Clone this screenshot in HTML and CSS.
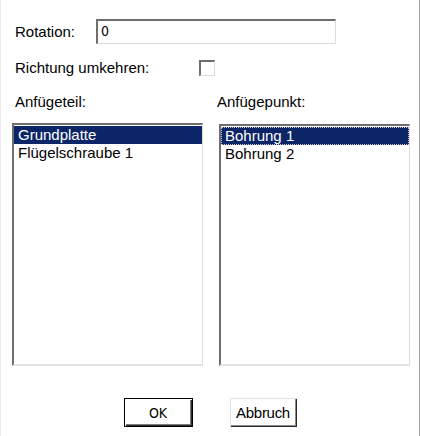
FILE: index.html
```html
<!DOCTYPE html>
<html lang="de">
<head>
<meta charset="utf-8">
<title>Anfügen</title>
<link rel="stylesheet" href="styles.css">
</head>
<body>
<div class="dialog">
  <div class="field-row rotation-row">
    <label class="field-label rotation-label" for="rotation">Rotation:</label>
    <div class="text-input" id="rotation">0</div>
  </div>
  <div class="field-row reverse-row">
    <span class="field-label reverse-label">Richtung umkehren:</span>
    <span class="checkbox"></span>
  </div>
  <div class="lists">
    <div class="list-col">
      <div class="list-label left-label">Anfügeteil:</div>
      <ul class="listbox">
        <li class="list-item selected">Grundplatte</li>
        <li class="list-item">Flügelschraube 1</li>
      </ul>
    </div>
    <div class="list-col right-col">
      <div class="list-label right-label">Anfügepunkt:</div>
      <ul class="listbox">
        <li class="list-item selected focused">Bohrung 1</li>
        <li class="list-item">Bohrung 2</li>
      </ul>
    </div>
  </div>
  <div class="buttons">
    <button class="btn btn-default">OK</button>
    <button class="btn btn-cancel">Abbruch</button>
  </div>
</div>
</body>
</html>
```
FILE: styles.css
```css
html, body {
  margin: 0;
  padding: 0;
  background: #fff;
}

body {
  font-family: "Liberation Sans", Arial, sans-serif;
  font-size: 15px;
  color: #000;
}

.dialog {
  width: 420px;
  height: 436px;
  box-sizing: border-box;
  border-right: 1px solid #a4a4a4;
  border-left: 1px solid #ececec;
  background: #fff;
  display: flex;
  flex-direction: column;
}

.field-row {
  display: flex;
  align-items: center;
  padding-left: 14px;
}

.rotation-row {
  padding-top: 19px;
}

.rotation-label {
  width: 81px;
}

.text-input {
  width: 240px;
  height: 25px;
  box-sizing: border-box;
  border-top: 2px solid #6e6e6e;
  border-left: 2px solid #6e6e6e;
  border-right: 1px solid #dcdcdc;
  border-bottom: 1px solid #dcdcdc;
  padding-left: 3px;
  line-height: 21px;
  font-family: "DejaVu Sans Condensed", "Liberation Sans", sans-serif;
  font-size: 14px;
}

.reverse-row {
  margin-top: 15px;
}

.reverse-label {
  width: 184px;
}

.checkbox {
  width: 16px;
  height: 16px;
  box-sizing: border-box;
  border-top: 2px solid #6e6e6e;
  border-left: 2px solid #6e6e6e;
  border-right: 1px solid #dcdcdc;
  border-bottom: 1px solid #dcdcdc;
  background: #fff;
}

.lists {
  display: flex;
  margin-top: 17px;
  padding-left: 11px;
}

.list-col {
  display: flex;
  flex-direction: column;
  width: 191px;
}

.right-col {
  margin-left: 16px;
}

.list-label {
  line-height: 17px;
  height: 17px;
  margin-bottom: 13px;
}

.left-label {
  padding-left: 3px;
}

.right-label {
  margin-left: -2px;
}

.listbox {
  list-style: none;
  margin: 0;
  padding: 1px 0 0 0;
  height: 243px;
  box-sizing: border-box;
  border-top: 2px solid #6e6e6e;
  border-left: 2px solid #6e6e6e;
  border-right: 1px solid #dcdcdc;
  border-bottom: 2px solid #e4e4e4;
}

.right-col .listbox {
  margin-top: 1px;
  height: 242px;
}

.list-item {
  height: 18px;
  line-height: 18px;
  padding-left: 4px;
  white-space: nowrap;
}

.list-item.selected {
  background: #0c2567;
  color: #fff;
}

.list-item.focused {
  outline: 1px dotted #c8c8c8;
  outline-offset: -1px;
}

.buttons {
  display: flex;
  justify-content: center;
  gap: 37px;
  margin-top: 32px;
}

.btn {
  height: 29px;
  box-sizing: border-box;
  margin: 0;
  padding: 0;
  font-family: "Liberation Sans", Arial, sans-serif;
  font-size: 15px;
  color: #000;
  background: #fff;
  cursor: default;
}

.btn-default {
  width: 69px;
  border: 1px solid #000;
  box-shadow: inset 1px 1px #fff, inset -1px -1px #2a2a2a, inset -2px -2px #7a7a7a;
  font-family: "DejaVu Sans Condensed", "Liberation Sans", sans-serif;
  font-size: 14px;
}

.btn-cancel {
  width: 67px;
  border: none;
  box-shadow: inset 1px 1px #e2e2e2, inset -1px -1px #2a2a2a, inset -2px -2px #8a8a8a;
  letter-spacing: -0.3px;
}
```
